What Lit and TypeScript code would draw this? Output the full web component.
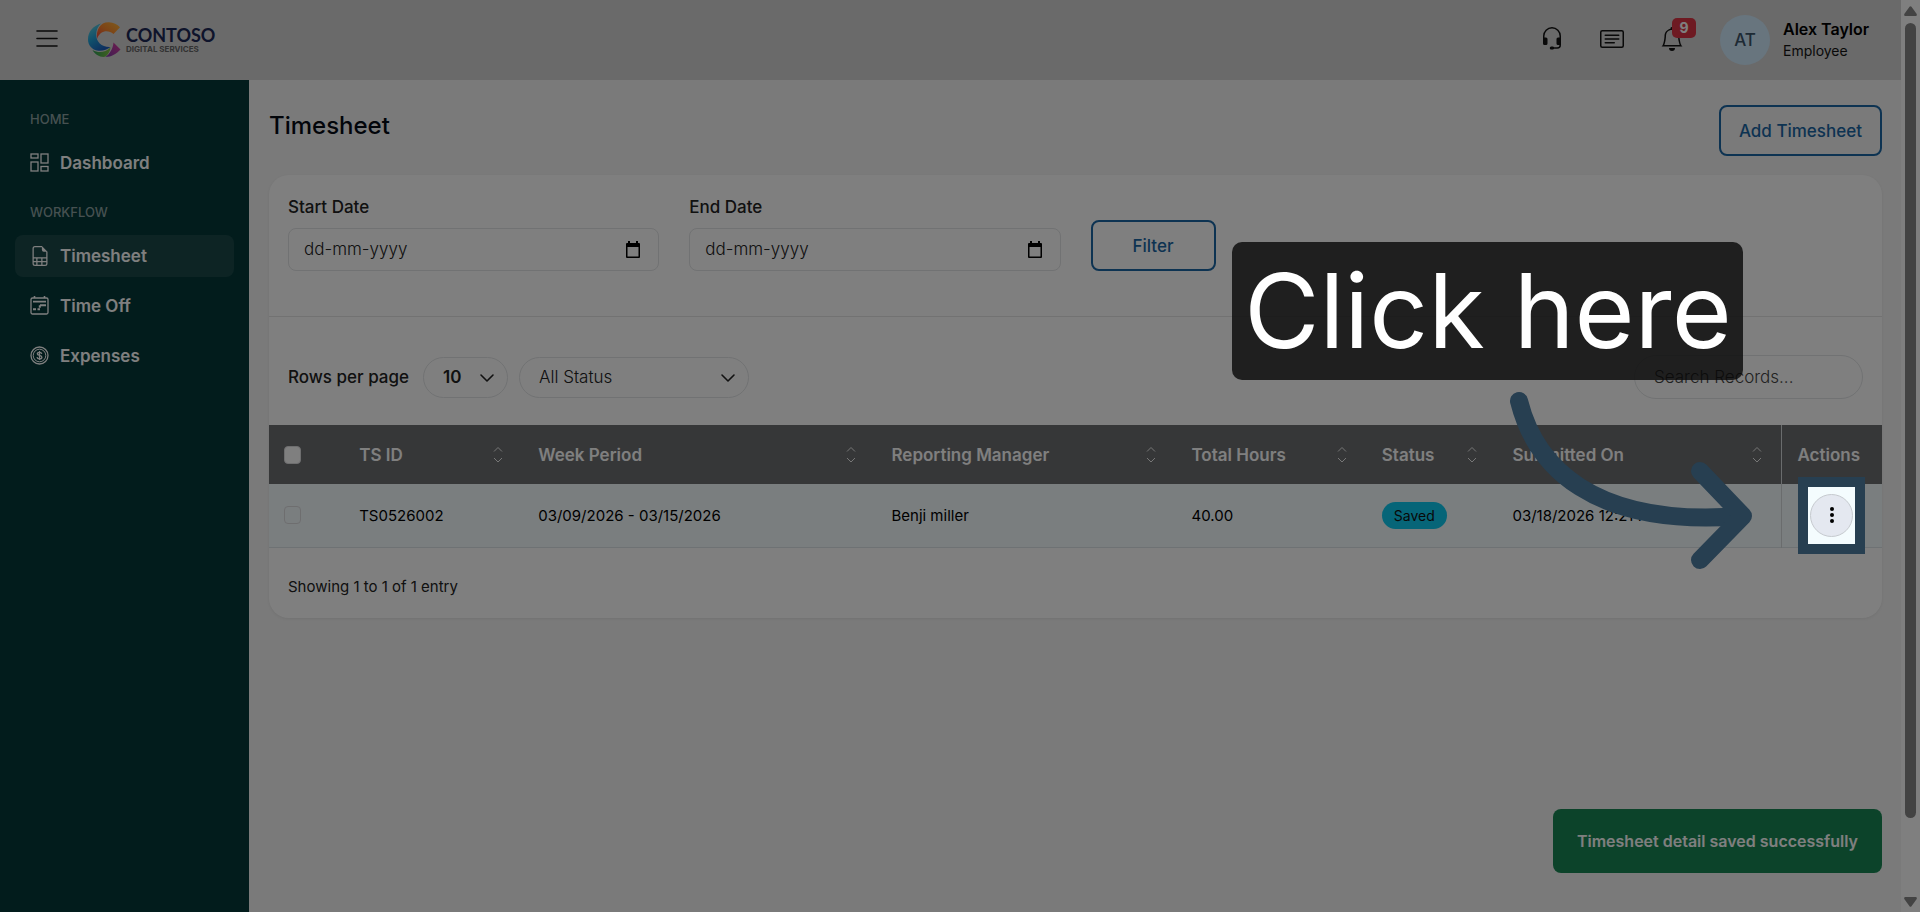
import { LitElement, html, css, svg } from "lit";
import { customElement, state } from "lit/decorators.js";

interface NavItem { label: string; icon: unknown; active?: boolean; }
interface NavGroup { title: string; items: NavItem[]; }

const dashboardIcon = svg`<svg viewBox="0 0 20 20" width="20" height="20" fill="none" stroke="currentColor" stroke-width="1.3">
  <rect x="1" y="1" width="7" height="4"/><rect x="11" y="1" width="7" height="9"/>
  <rect x="1" y="9" width="7" height="9"/><rect x="11" y="13.5" width="7" height="4.5"/></svg>`;
const sheetIcon = svg`<svg viewBox="0 0 16 16" width="20" height="20" fill="currentColor">
  <path d="M14 14V4.500L9.500 0H4a2 2 0 0 0-2 2v12a2 2 0 0 0 2 2h8a2 2 0 0 0 2-2M9.500 3A1.500 1.500 0 0 0 11 4.500h2V9H3V2a1 1 0 0 1 1-1h5.500zM3 12v-2h2v2zm0 1h2v2H4a1 1 0 0 1-1-1zm3 2v-2h3v2zm4 0v-2h3v1a1 1 0 0 1-1 1zm3-3h-3v-2h3zm-7 0v-2h3v2z"/></svg>`;
const calendarIcon = svg`<svg viewBox="0 0 20 20" width="20" height="20" fill="none" stroke="currentColor" stroke-width="1.300">
  <rect x="1" y="2" width="17" height="16" rx="1.500"/><path d="M4.500 0v2M14.500 0v2M3 5.600h13" stroke-width="1.600"/>
  <path d="M10 9.300h6M3 13.300h3M7.500 13.300h2.500M9.800 9.300v2.500" stroke-width="2"/></svg>`;
const coinIcon = svg`<svg viewBox="0 0 20 20" width="20" height="20" fill="none" stroke="currentColor" stroke-width="1.300">
  <circle cx="9.500" cy="9.500" r="8.500"/><circle cx="9.500" cy="9.500" r="6.300" stroke-width="1"/>
  <path d="M11.800 7.800c-.2-1-1-1.500-2.300-1.500-1.400 0-2.200.6-2.200 1.500 0 2.300 4.600 1 4.600 3.400 0 1-.9 1.700-2.400 1.700s-2.300-.6-2.500-1.700M9.500 5v9"/></svg>`;
const chevron = svg`<svg class="chevron" viewBox="0 0 16 16" width="16" height="16" fill="none" stroke="currentColor" stroke-width="1.600" stroke-linecap="round" stroke-linejoin="round" aria-hidden="true"><path d="m2 5 6 6 6-6"/></svg>`;
const sortIcon = svg`<svg viewBox="0 0 10 18" width="10" height="18" fill="none" stroke="currentColor" stroke-width="1"><path d="M1 5.500 5 1.500l4 4M1 12l4 4 4-4"/></svg>`;
const pickerIcon = svg`<svg viewBox="0 0 16 18" width="16" height="18"><path fill="currentColor" fill-rule="evenodd" d="M3 0h2v2h6V0h2v2h1a1 1 0 0 1 1 1v13a1 1 0 0 1-1 1H2a1 1 0 0 1-1-1V3a1 1 0 0 1 1-1h1zM2.500 6v9.500h11V6z"/></svg>`;

const NAV: NavGroup[] = [
  { title: "HOME", items: [{ label: "Dashboard", icon: dashboardIcon }] },
  {
    title: "WORKFLOW",
    items: [
      { label: "Timesheet", icon: sheetIcon, active: true },
      { label: "Time Off", icon: calendarIcon },
      { label: "Expenses", icon: coinIcon },
    ],
  },
];

const COLUMNS = ["TS ID", "Week Period", "Reporting Manager", "Total Hours", "Status", "Submitted On"];

@customElement("app-header")
export class AppHeader extends LitElement {
  static styles = css`
    :host { display: flex; align-items: center; height: 80px; padding: 0 31px 0 36px; box-sizing: border-box; background: #d4d4d4; color: #121212; }
    button { border: 0; background: none; padding: 0 0 3px; color: inherit; font: inherit; display: flex; }
    .brand { display: flex; align-items: center; gap: 5px; margin-left: 30px; text-decoration: none; }
    .words { display: flex; flex-direction: column; color: #1c2856; }
    .name { font: 700 18px/18px "Lato", sans-serif; }
    .sub { font: 700 8px/10px "Inter", sans-serif; color: #666; }
    .tools { display: flex; align-items: center; gap: 36px; margin-left: auto; }
    .bell { position: relative; }
    .badge { position: absolute; left: 12px; top: -9px; width: 24px; height: 20px; border-radius: 5px; background: #dc3545; color: #fff; font-size: 14px; line-height: 20px; font-weight: 700; text-align: center; }
    .user { display: flex; align-items: center; gap: 13px; margin-left: 36px; }
    .avatar { width: 50px; height: 50px; border-radius: 50%; background: #d0eafc; color: #3c5468; display: grid; place-items: center; font-size: 17px; font-weight: 500; }
    .who { min-width: 87px; font-size: 16px; line-height: 22px; font-weight: 600; color: #000; }
    .role { font-size: 14px; font-weight: 400; color: #121212; }
  `;
  render() {
    return html`
      <button aria-label="Toggle menu">
        <svg width="22" height="20" viewBox="0 0 22 20" stroke="currentColor" stroke-width="1.600" stroke-linecap="round"><path d="M1 2h20M1 9.500h20M1 17h20"/></svg>
      </button>
      <a class="brand" href="#">
        <svg width="33" height="36" viewBox="0 0 33 36" aria-hidden="true">
          <defs>
            <linearGradient id="o" x1="0" y1="1" x2="1" y2="0"><stop stop-color="#f0453c"/><stop offset=".5" stop-color="#fb8a2c"/><stop offset="1" stop-color="#fdb73a"/></linearGradient>
            <linearGradient id="b" x1="0" y1="0" x2=".6" y2="1"><stop stop-color="#6fd8dc"/><stop offset=".5" stop-color="#22a3d8"/><stop offset="1" stop-color="#1c5fbe"/></linearGradient>
            <linearGradient id="g" x1="0" y1="0" x2="1" y2="0"><stop stop-color="#2b9d58"/><stop offset="1" stop-color="#85c440"/></linearGradient>
            <linearGradient id="m" x1="0" y1="1" x2="1" y2="0"><stop stop-color="#7a3ba8"/><stop offset="1" stop-color="#e03a9c"/></linearGradient>
          </defs>
          <path fill="url(#b)" d="M13 1.500C5 4 0 9.500 0 17.500 0 23 4 27.500 9 28.500c5 .8 10-.5 13.500-3.500C14 25.500 8 20 8.200 12.500 8.300 8 10 4 13 1.500z"/>
          <path fill="url(#o)" d="M9 17C8 8 12 0 21 .3c4.500.2 8.300 2 11 5L25.500 12C20 7.500 12 8.500 9 17z"/>
          <path fill="url(#g)" d="M4.500 28c6 3.500 13 2.500 18-2.500-.5 4-2.500 7.500-5.500 9.300C12 35.500 7 32.500 4.500 28z"/>
          <path fill="url(#m)" d="M25.500 20.500 32.500 27.500C28.500 32 23.500 34.800 17.500 35 21.500 32 25 27 25.500 20.500z"/>
        </svg>
        <span class="words"><span class="name">CONTOSO</span><span class="sub">DIGITAL SERVICES</span></span>
      </a>
      <div class="tools">
        <button aria-label="Support"><svg width="24" height="24" viewBox="0 0 16 16" fill="currentColor"><path d="M8 1a5 5 0 0 0-5 5v1h1a1 1 0 0 1 1 1v3a1 1 0 0 1-1 1H3a1 1 0 0 1-1-1V6a6 6 0 1 1 12 0v6a2.500 2.500 0 0 1-2.500 2.500H9.366a1 1 0 0 1-.866.5h-1a1 1 0 1 1 0-2h1a1 1 0 0 1 .866.5H11.500A1.500 1.500 0 0 0 13 12h-1a1 1 0 0 1-1-1V8a1 1 0 0 1 1-1h1V6a5 5 0 0 0-5-5"/></svg></button>
        <button aria-label="News"><svg width="24" height="24" viewBox="0 0 16 16" fill="currentColor"><path d="M14.500 3a.5.5 0 0 1 .5.5v9a.5.5 0 0 1-.5.5h-13a.5.5 0 0 1-.5-.5v-9a.5.5 0 0 1 .5-.5zm-13-1A1.500 1.500 0 0 0 0 3.500v9A1.500 1.500 0 0 0 1.500 14h13a1.500 1.500 0 0 0 1.500-1.500v-9A1.500 1.500 0 0 0 14.500 2z"/><path d="M3 5.500a.5.5 0 0 1 .5-.5h9a.5.5 0 0 1 0 1h-9a.5.5 0 0 1-.5-.5M3 8a.5.5 0 0 1 .5-.5h9a.5.5 0 0 1 0 1h-9A.5.5 0 0 1 3 8m0 2.500a.5.5 0 0 1 .5-.5h6a.5.5 0 0 1 0 1h-6a.5.5 0 0 1-.5-.5"/></svg></button>
        <button class="bell" aria-label="Notifications"><svg width="24" height="24" viewBox="0 0 16 16" fill="currentColor"><path d="M8 16a2 2 0 0 0 2-2H6a2 2 0 0 0 2 2M8 1.918l-.797.161A4 4 0 0 0 4 6c0 .628-.134 2.197-.459 3.742-.16.767-.376 1.566-.663 2.258h10.244c-.287-.692-.502-1.490-.663-2.258C12.134 8.197 12 6.628 12 6a4 4 0 0 0-3.203-3.920zM14.220 12c.223.447.481.801.780 1H1c.299-.199.557-.553.780-1C2.680 10.200 3 6.880 3 6c0-2.420 1.720-4.440 4.005-4.901a1 1 0 1 1 1.990 0A5 5 0 0 1 13 6c0 .880.320 4.200 1.220 6"/></svg><span class="badge">9</span></button>
      </div>
      <div class="user">
        <div class="avatar">AT</div>
        <div class="who">Alex Taylor<div class="role">Employee</div></div>
      </div>`;
  }
}

@customElement("app-sidebar")
export class AppSidebar extends LitElement {
  static styles = css`
    :host { display: block; background: #043838; padding: 24px 15px; box-sizing: border-box; }
    h2 { margin: 0; padding: 0 15px; font-size: 13px; line-height: 30px; font-weight: 500; color: #8da2a2; }
    ul { list-style: none; margin: 8px 0 13px; padding: 0; display: grid; gap: 8px; }
    a { display: flex; align-items: center; gap: 10px; height: 42px; padding: 0 15px; border-radius: 8px; color: #fff; text-decoration: none; font-size: 17px; font-weight: 600; }
    a.active { background: #1a4949; }
    svg { display: block; }
  `;
  render() {
    return html`<nav>${NAV.map(g => html`<h2>${g.title}</h2><ul>${g.items.map(i => html`
      <li><a href="#" class=${i.active ? "active" : ""}>${i.icon}<span>${i.label}</span></a></li>`)}</ul>`)}</nav>`;
  }
}

@customElement("app-root")
export class AppRoot extends LitElement {
  @state() private saved = true;

  static styles = css`
    :host { display: grid; grid-template-columns: minmax(0, 1fr) 19px; height: 100vh; overflow: hidden; background: #f4f4f4; font-family: "Inter", sans-serif; font-size: 17px; color: #222; }
    * { box-sizing: border-box; }
    button, input, select { font: inherit; color: inherit; }
    .page { display: grid; grid-template: 80px minmax(0, 1fr) / 249px minmax(0, 1fr); }
    app-header { grid-column: 1 / -1; }
    .scroll { background: #fff; display: flex; flex-direction: column; align-items: center; padding: 6px 0 5px; color: #868686; }
    .track { flex: 1; width: 11px; margin: 7px 0 0; }
    .thumb { height: 91%; border-radius: 6px; background: #868686; }
    main { padding: 25px 19px 20px 20px; }
    .top { display: flex; justify-content: space-between; margin-bottom: 19px; }
    h1 { margin: 0; font-size: 24px; line-height: 41px; font-weight: 500; color: #050a14; }
    .btn { height: 51px; border: 2px solid #1a66a4; border-radius: 8px; background: none; color: #1a66a4; font-weight: 500; padding: 0 18px; }
    .card { background: #fff; border-radius: 20px; box-shadow: 0 1px 3px #0001; }
    .filters { display: grid; grid-template-columns: repeat(4, minmax(0, 1fr)); gap: 30px; padding: 20px 19px 45px; border-bottom: 1px solid #e4e4e4; }
    .field label { display: block; line-height: 25px; margin-bottom: 8px; font-weight: 500; }
    .date { position: relative; }
    .date input { display: block; width: 100%; height: 43px; border: 1px solid #e2e4e6; border-radius: 8px; padding: 0 48px 2px 15px; background: none; font-weight: 300; }
    input::placeholder { color: #222; opacity: 1; }
    .date button { position: absolute; right: 18px; top: 13px; border: 0; padding: 0; background: none; color: #000; line-height: 0; }
    .filters .btn { align-self: end; justify-self: start; width: 125px; }
    .bar { display: flex; align-items: center; gap: 11px; padding: 38px 19px 26px; }
    .bar label { font-weight: 500; margin-right: 3px; }
    .pick { position: relative; }
    .pick select { appearance: none; display: block; height: 41px; border: 1px solid #e2e4e6; border-radius: 21px; background: none; padding: 0 19px; }
    .rows select { width: 85px; font-weight: 600; }
    .status select { width: 230px; font-weight: 300; }
    .chevron { position: absolute; right: 13px; top: 13px; pointer-events: none; }
    .search { margin-left: auto; width: 229px; height: 44px; border: 1px solid #e2e4e6; border-radius: 22px; background: none; padding: 0 19px; font-weight: 300; }
    .search::placeholder { color: #444; }
    table { width: 100%; border-collapse: collapse; table-layout: fixed; }
    th, td { padding: 0 16px; text-align: left; white-space: nowrap; }
    thead tr { height: 59px; background: #6c6e70; color: #fff; }
    th { font-weight: 600; }
    .head { display: flex; justify-content: space-between; align-items: center; gap: 8px; padding-right: 3px; }
    .head svg { display: block; color: #eee; }
    tbody tr { height: 63px; background: #f4fcfe; border-bottom: 1px solid #dde4e8; color: #000; }
    td { font-size: 15px; }
    th:last-child, td:last-child { border-left: 1px solid #d4d8da; padding: 0 15px; }
    tr > td:last-child { padding: 0 28px; }
    th:first-child, td:first-child { padding-left: 15px; }
    input[type="checkbox"] { appearance: none; display: block; width: 17px; height: 18px; margin: 0; border: 1px solid #dddcdf; border-radius: 4px; background: #fff; }
    td input[type="checkbox"] { background: none; }
    .c0 { width: 4.600%; } .c1 { width: 11.100%; } .c2 { width: 21.900%; } .c3 { width: 18.600%; }
    .c4 { width: 11.800%; } .c5 { width: 8.100%; } .c6 { width: 17.700%; } .c7 { width: 6.200%; }
    .pill { display: inline-block; background: #0dcaf0; border-radius: 14px; padding: 0 12px; line-height: 27px; font-size: 14px; color: #111; }
    .foot { padding: 30px 19px 22px; line-height: 18px; font-size: 15px; }
    .toast { position: fixed; right: 38px; bottom: 39px; padding: 22px 24px; font-size: 16px; line-height: 20px; border-radius: 8px; background: #198754; color: #fff; font-weight: 600; }
    .anchor { position: relative; width: 43px; height: 43px; z-index: 5; }
    .more { width: 43px; height: 43px; border-radius: 50%; border: 1px solid #c6cacf; background: #e4e8f0; padding: 0; display: grid; place-items: center; color: #000; }
    .spot { position: absolute; inset: -17px -12px; border: 10px solid #273f51; box-shadow: 0 0 0 3000px rgba(0, 0, 0, .5); pointer-events: none; }
    .tip { position: absolute; right: 110px; bottom: 157px; width: 511px; height: 138px; border-radius: 10px; background: rgba(8, 8, 8, .8); color: #fff; font-size: 103px; line-height: 138px; text-align: center; }
    .arrow { position: absolute; right: 84px; top: -114px; pointer-events: none; }
  `;

  private dateField(id: string, label: string) {
    return html`<div class="field"><label for=${id}>${label}</label>
      <div class="date"><input id=${id} type="text" placeholder="dd-mm-yyyy"><button aria-label="Open calendar">${pickerIcon}</button></div></div>`;
  }

  render() {
    return html`
      <div class="page">
        <app-header></app-header>
        <app-sidebar></app-sidebar>
        <main>
          <div class="top"><h1>Timesheet</h1><button class="btn">Add Timesheet</button></div>
          <section class="card">
            <div class="filters">
              ${this.dateField("start", "Start Date")}
              ${this.dateField("end", "End Date")}
              <button class="btn">Filter</button>
            </div>
            <div class="bar">
              <label for="rows">Rows per page</label>
              <div class="pick rows"><select id="rows"><option>10</option><option>25</option></select>${chevron}</div>
              <div class="pick status"><select aria-label="Status"><option>All Status</option></select>${chevron}</div>
              <input class="search" type="text" aria-label="Search records" placeholder="Search Records...">
            </div>
            <table>
              <colgroup>${[0, 1, 2, 3, 4, 5, 6, 7].map(n => html`<col class="c${n}">`)}</colgroup>
              <thead><tr>
                <th><input type="checkbox" aria-label="Select all"></th>
                ${COLUMNS.map(c => html`<th><div class="head">${c}${sortIcon}</div></th>`)}
                <th>Actions</th>
              </tr></thead>
              <tbody><tr>
                <td><input type="checkbox" aria-label="Select TS0526002"></td>
                <td>TS0526002</td>
                <td>03/09/2026 - 03/15/2026</td>
                <td>Benji miller</td>
                <td>40.00</td>
                <td><span class="pill">Saved</span></td>
                <td>03/18/2026 12:21 PM</td>
                <td><div class="anchor">
                  <button class="more" aria-label="Row actions"><svg width="6" height="18" viewBox="0 0 6 18" fill="currentColor"><circle cx="3" cy="3" r="2"/><circle cx="3" cy="9" r="2"/><circle cx="3" cy="15" r="2"/></svg></button>
                  <div class="spot"></div>
                  <div class="tip" role="tooltip">Click here</div>
                  <svg class="arrow" width="270" height="200" viewBox="0 0 270 200" fill="none" stroke="#273f51" stroke-width="18" stroke-linecap="round" stroke-linejoin="round" aria-hidden="true">
                    <path d="M20 21C36 85 92 148 243 136"/><path d="M201 91 244 136 201 180"/>
                  </svg>
                </div></td>
              </tr></tbody>
            </table>
            <div class="foot">Showing 1 to 1 of 1 entry</div>
          </section>
          ${this.saved ? html`<div class="toast" role="status">Timesheet detail saved successfully</div>` : ""}
        </main>
      </div>
      <div class="scroll" aria-hidden="true">
        <svg width="13" height="10" viewBox="0 0 13 10" fill="currentColor"><path d="M5.500.8q1-1.200 2 0L12.700 8q.5 2-1 2H1.300q-1.500 0-1-2z"/></svg>
        <div class="track"><div class="thumb"></div></div>
        <svg width="13" height="10" viewBox="0 0 13 10" fill="currentColor"><path d="M5.500 9.200q1 1.200 2 0L12.700 2q.5-2-1-2H1.300Q-.2 0 .3 2z"/></svg>
      </div>`;
  }
}
